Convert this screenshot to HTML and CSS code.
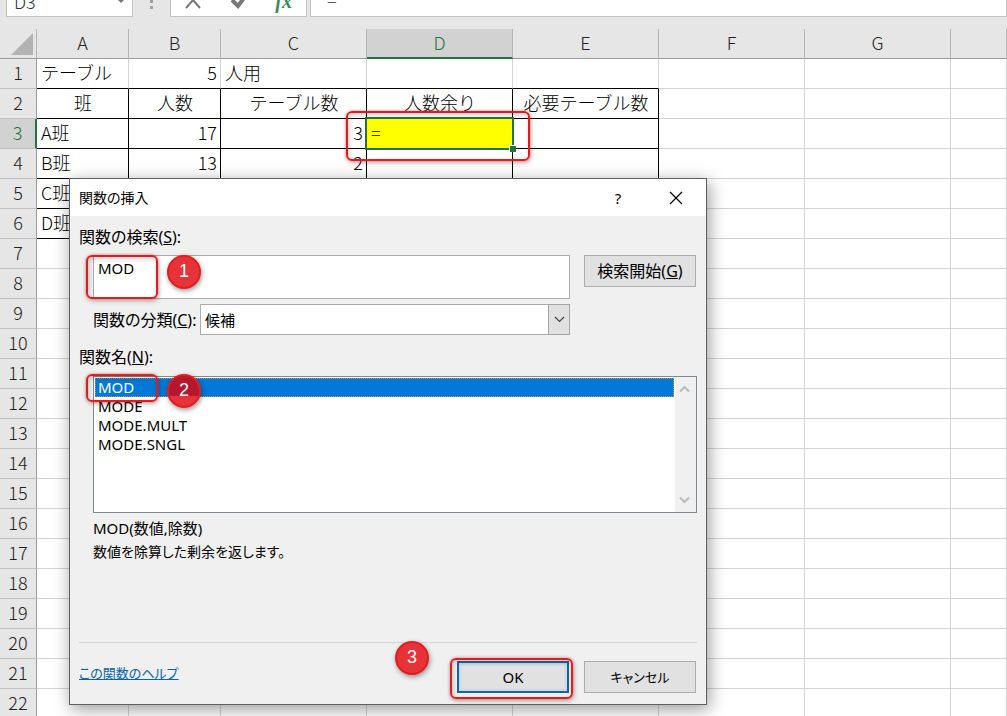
FILE: index.html
```html
<!DOCTYPE html>
<html lang="ja">
<head>
<meta charset="utf-8">
<title>関数の挿入</title>
<link rel="stylesheet" href="styles.css">
</head>
<body>
<header class="formula-bar">
  <div class="name-box">
    <input class="bar-input" aria-label="名前ボックス" value="D3">
    <span class="name-arrow"></span>
  </div>
  <span class="bar-dots">
    <svg width="4" height="18" viewBox="0 0 4 18"><path d="M0 1h3v3H0zM0 7h3v3H0z" fill="#a0a0a0"/></svg>
  </span>
  <div class="bar-buttons">
    <button type="button" aria-label="キャンセル"><svg width="20" height="20" viewBox="0 0 20 20"><path d="M3 1L17 17M17 1L3 17" fill="none" stroke="#777" stroke-width="2"/></svg></button>
    <button type="button" aria-label="入力"><svg width="20" height="20" viewBox="0 0 20 20"><path d="M3 9L9 15L18 3" fill="none" stroke="#777" stroke-width="4"/></svg></button>
    <button type="button" class="fx" aria-label="関数の挿入"><i>fx</i></button>
  </div>
  <input class="bar-input formula" aria-label="数式バー" value="=">
</header>

<main>
<table class="sheet">
  <colgroup><col class="c-num"><col class="c-s"><col class="c-s"><col class="c-m"><col class="c-m"><col class="c-m"><col class="c-m"><col class="c-m"><col></colgroup>
  <thead>
    <tr><th class="corner"><svg width="22" height="22" viewBox="0 0 22 22"><path d="M22 0V22H0z" fill="#b2b2b2"/></svg></th><th>A</th><th>B</th><th>C</th><th class="active">D</th><th>E</th><th>F</th><th>G</th><th></th></tr>
  </thead>
  <tbody>
    <tr class="first"><th>1</th><td>テーブル</td><td class="num">5</td><td>人用</td><td></td><td></td><td></td><td></td><td></td></tr>
    <tr class="boxed titles"><th>2</th><td>班</td><td>人数</td><td>テーブル数</td><td>人数余り</td><td>必要テーブル数</td><td></td><td></td><td></td></tr>
    <tr class="boxed"><th class="active">3</th><td>A班</td><td class="num">17</td><td class="num">3</td><td class="selected">=<span class="selection"></span><span class="mark mark-cell"></span></td><td></td><td></td><td></td><td></td></tr>
    <tr class="boxed"><th>4</th><td>B班</td><td class="num">13</td><td class="num">2</td><td></td><td></td><td></td><td></td><td></td></tr>
    <tr class="boxed"><th>5</th><td>C班</td><td></td><td></td><td></td><td></td><td></td><td></td><td></td></tr>
    <tr class="boxed"><th>6</th><td>D班</td><td></td><td></td><td></td><td></td><td></td><td></td><td></td></tr>
    <tr><th>7</th><td></td><td></td><td></td><td></td><td></td><td></td><td></td><td></td></tr>
    <tr><th>8</th><td></td><td></td><td></td><td></td><td></td><td></td><td></td><td></td></tr>
    <tr><th>9</th><td></td><td></td><td></td><td></td><td></td><td></td><td></td><td></td></tr>
    <tr><th>10</th><td></td><td></td><td></td><td></td><td></td><td></td><td></td><td></td></tr>
    <tr><th>11</th><td></td><td></td><td></td><td></td><td></td><td></td><td></td><td></td></tr>
    <tr><th>12</th><td></td><td></td><td></td><td></td><td></td><td></td><td></td><td></td></tr>
    <tr><th>13</th><td></td><td></td><td></td><td></td><td></td><td></td><td></td><td></td></tr>
    <tr><th>14</th><td></td><td></td><td></td><td></td><td></td><td></td><td></td><td></td></tr>
    <tr><th>15</th><td></td><td></td><td></td><td></td><td></td><td></td><td></td><td></td></tr>
    <tr><th>16</th><td></td><td></td><td></td><td></td><td></td><td></td><td></td><td></td></tr>
    <tr><th>17</th><td></td><td></td><td></td><td></td><td></td><td></td><td></td><td></td></tr>
    <tr><th>18</th><td></td><td></td><td></td><td></td><td></td><td></td><td></td><td></td></tr>
    <tr><th>19</th><td></td><td></td><td></td><td></td><td></td><td></td><td></td><td></td></tr>
    <tr><th>20</th><td></td><td></td><td></td><td></td><td></td><td></td><td></td><td></td></tr>
    <tr><th>21</th><td></td><td></td><td></td><td></td><td></td><td></td><td></td><td></td></tr>
    <tr><th>22</th><td></td><td></td><td></td><td></td><td></td><td></td><td></td><td></td></tr>
  </tbody>
</table>
</main>

<section class="dialog" role="dialog" aria-labelledby="dlg-title">
  <div class="title-bar">
    <h1 id="dlg-title">関数の挿入</h1>
    <button type="button">?</button>
    <button type="button" aria-label="閉じる"><svg width="14" height="14" viewBox="0 0 14 14"><path d="M1 1L13 13M13 1L1 13" fill="none" stroke="#000" stroke-width="1.2"/></svg></button>
  </div>
  <form class="dialog-body">
    <label class="caption" for="search">関数の検索(<u>S</u>):</label>
    <div class="search-row">
      <textarea id="search">MOD</textarea>
      <button type="button" class="btn caption">検索開始(<u>G</u>)</button>
      <span class="mark mark-search"></span>
      <span class="badge badge-side">1</span>
    </div>
    <div class="category-row">
      <label class="caption" for="category">関数の分類(<u>C</u>):</label>
      <div class="combo">
        <select id="category"><option>候補</option></select>
        <span class="combo-arrow"><svg width="11" height="7" viewBox="0 0 11 7"><path d="M1 1L5.500 5.500L10 1" fill="none" stroke="#444" stroke-width="1.200"/></svg></span>
      </div>
    </div>
    <span class="caption" id="fn-label">関数名(<u>N</u>):</span>
    <div class="list-box">
      <ul role="listbox" aria-labelledby="fn-label">
        <li role="option" aria-selected="true">MOD</li>
        <li role="option">MODE</li>
        <li role="option">MODE.MULT</li>
        <li role="option">MODE.SNGL</li>
      </ul>
      <div class="scroll">
        <button type="button" aria-label="上へ"><svg width="11" height="8" viewBox="0 0 11 8"><path d="M1 6.500L5.500 2L10 6.500" fill="none" stroke="#b9b9b9" stroke-width="2"/></svg></button>
        <button type="button" aria-label="下へ"><svg width="11" height="8" viewBox="0 0 11 8"><path d="M1 1.500L5.500 6L10 1.500" fill="none" stroke="#b9b9b9" stroke-width="2"/></svg></button>
      </div>
      <span class="mark mark-item"></span>
      <span class="badge badge-side badge-list">2</span>
    </div>
    <div class="description">
      <p>MOD(数値,除数)</p>
      <p class="detail">数値を除算した剰余を返します。</p>
    </div>
    <footer class="actions">
      <a href="#help">この関数のヘルプ</a>
      <div class="ok-wrap">
        <button type="button" class="btn ok">OK</button>
        <span class="mark mark-ok"></span>
        <span class="badge badge-ok">3</span>
      </div>
      <button type="button" class="btn cancel">キャンセル</button>
    </footer>
  </form>
</section>
</body>
</html>
```

FILE: styles.css
```css
* {
  box-sizing: border-box;
}

body {
  margin: 0;
  height: 100vh;
  overflow: hidden;
  position: relative;
  background: #e6e6e6;
  color: #000;
  font-family: "Noto Sans CJK JP", sans-serif;
  font-size: 18px;
  font-weight: 300;
}

button,
input,
textarea,
select {
  font: inherit;
  color: inherit;
  margin: 0;
  padding: 0;
  border: 0;
  border-radius: 0;
  background: none;
}

/* Formula bar */
.formula-bar {
  display: flex;
  align-items: flex-end;
  height: 17px;
  margin-bottom: 12px;
  padding-left: 6px;
  overflow: hidden;
}

.name-box,
.bar-buttons,
.formula {
  height: 32px;
  border: 1px solid #c3c3c3;
  background: #fff;
}

.name-box {
  display: flex;
  align-items: center;
  width: 127px;
  padding: 0 7px;
}

.bar-input {
  min-width: 0;
  flex: 1;
  color: #333;
}

.formula {
  height: 36px;
  padding-left: 16px;
}

.name-arrow {
  border: 4px solid transparent;
  border-top-color: #777;
  border-bottom: 0;
}

.bar-dots {
  display: flex;
  justify-content: center;
  width: 37px;
}

.bar-buttons {
  display: flex;
  justify-content: space-between;
  align-items: center;
  width: 137px;
  padding: 0 14px 0 12px;
  margin-right: 3px;
}

.bar-buttons button {
  display: flex;
}

.bar-buttons .fx {
  font-family: "Liberation Serif", serif;
  font-size: 20px;
  font-weight: 700;
  line-height: 20px;
  color: #3c8a56;
}

/* Worksheet grid */
.sheet {
  width: 100%;
  table-layout: fixed;
  border-spacing: 0;
  background: #fff;
  line-height: 24px;
}

.c-num {
  width: 37px;
}

.c-s {
  width: 92px;
}

.c-m {
  width: 146px;
}

.sheet th,
.sheet td {
  height: 30px;
  padding: 0 3px 4px 4px;
  border-right: 1px solid #d4d4d4;
  border-bottom: 1px solid #d4d4d4;
  font-weight: 300;
  white-space: nowrap;
}

.sheet th {
  padding: 0 0 4px;
  background: #e6e6e6;
  color: #222;
  border-right-color: #b4b4b4;
  border-bottom-color: #c0c0c0;
}

.sheet thead th {
  border-bottom-color: #9b9b9b;
}

.sheet tbody th {
  border-right-color: #9b9b9b;
}

.sheet th.active {
  background: #d2d2d2;
  color: #217346;
}

.sheet thead th.active {
  padding-bottom: 3px;
  border-bottom: 2px solid #217346;
}

.sheet tbody th.active {
  border-right: 2px solid #217346;
}

.sheet .corner {
  padding: 0;
}

.sheet .corner svg {
  display: block;
  margin-left: 11px;
}

.sheet .num {
  text-align: right;
}

.titles td {
  text-align: center;
}

.first td:nth-child(-n+6) {
  border-bottom-color: #000;
}

.boxed td:nth-child(-n+6) {
  border-right-color: #000;
  border-bottom-color: #000;
}

.sheet .selected {
  position: relative;
  background: #ff0;
}

.selection {
  position: absolute;
  inset: -2px;
  border: 2px solid #217346;
}

.selection::after {
  content: "";
  position: absolute;
  right: -4px;
  bottom: -4px;
  width: 6px;
  height: 6px;
  border: 1px solid #fff;
  border-width: 1px 0 0 1px;
  background: #217346;
}

/* Callouts */
.mark {
  position: absolute;
  border: 2px solid #da1f22;
  border-radius: 6px;
  box-shadow: 0 0 3px rgba(230, 30, 30, 0.5), 1px 2px 5px rgba(0, 0, 0, 0.25), inset 1px 2px 5px rgba(0, 0, 0, 0.2);
  pointer-events: none;
}

.mark-cell {
  inset: -8px -18px -13px -21px;
}

.badge {
  position: absolute;
  width: 34px;
  height: 34px;
  border: 2px solid #e01e22;
  border-radius: 50%;
  background: #e63238;
  box-shadow: 1px 2px 5px rgba(0, 0, 0, 0.4);
  color: #fff;
  font-family: "Liberation Sans", sans-serif;
  font-size: 18px;
  line-height: 28px;
  text-align: center;
}

/* Insert-function dialog */
.dialog {
  position: absolute;
  left: 69px;
  top: 178px;
  width: 638px;
  border: 1px solid #5f5f5f;
  background: #f0f0f0;
  box-shadow: 2px 4px 16px rgba(0, 0, 0, 0.4);
  font-family: "Noto Sans", "Noto Sans CJK JP", sans-serif;
  font-size: 15px;
  font-weight: 400;
  line-height: 24px;
  font-feature-settings: "palt";
}

.title-bar {
  display: flex;
  align-items: center;
  height: 37px;
  padding-left: 9px;
  background: #fff;
}

.title-bar h1 {
  flex: 1;
  margin: 0;
  font-size: 14px;
  font-weight: 400;
}

.title-bar button {
  display: flex;
  align-items: center;
  justify-content: center;
  width: 58px;
  height: 36px;
}

.title-bar button:last-child {
  margin-right: 1px;
}

.dialog-body {
  display: flex;
  flex-direction: column;
  padding: 9px 9px 0;
}

.caption {
  display: block;
  font-size: 16px;
}

.search-row {
  position: relative;
  display: flex;
  align-items: flex-start;
  gap: 14px;
  margin: 6px 1px 5px 14px;
}

textarea {
  flex: 1;
  height: 44px;
  padding: 0 4px;
  border: 1px solid #ababab;
  background: #fff;
  resize: none;
}

.btn {
  width: 112px;
  height: 32px;
  border: 1px solid #adadad;
  background: #e1e1e1;
  text-align: center;
}

.cancel,
.actions a {
  font-size: 13px;
}

.category-row {
  display: flex;
  align-items: center;
  justify-content: space-between;
  margin: 0 127px 10px 14px;
}

.combo {
  position: relative;
  width: 370px;
}

.combo select {
  display: block;
  width: 100%;
  height: 31px;
  padding-left: 4px;
  border: 1px solid #ababab;
  background: #fff;
  appearance: none;
}

.combo-arrow {
  position: absolute;
  inset: 0 0 0 auto;
  display: flex;
  align-items: center;
  justify-content: center;
  width: 22px;
  border: 1px solid #a5a5a5;
  background: #e1e1e1;
  pointer-events: none;
}

.list-box {
  position: relative;
  display: flex;
  height: 137px;
  margin: 7px 0 0 14px;
  border: 1px solid #828790;
  background: #fff;
}

.list-box ul {
  flex: 1;
  margin: 0;
  padding: 1px;
  list-style: none;
  line-height: 19px;
}

.list-box li {
  padding-left: 3px;
}

.list-box li[aria-selected="true"] {
  outline: 1px dotted #d88a3c;
  outline-offset: -1px;
  background: #0078d7;
  color: #fff;
}

.scroll {
  display: flex;
  flex-direction: column;
  justify-content: space-between;
  width: 21px;
  padding-right: 2px;
  background: #f0f0f0;
}

.scroll button {
  display: flex;
  align-items: center;
  justify-content: center;
  height: 24px;
}

.description {
  min-height: 129px;
  padding: 3px 0 0 14px;
}

.description p {
  margin: 0;
}

.description .detail {
  font-size: 14px;
}

.actions {
  display: flex;
  align-items: center;
  gap: 15px;
  height: 62px;
  padding: 6px 1px 0 0;
  border-top: 1px solid #d5d5d5;
}

.actions a {
  margin: 0 auto 8px 0;
  color: #0563a8;
}

.ok-wrap {
  position: relative;
  display: flex;
}

.ok {
  border: 2px solid #1d6494;
  box-shadow: inset 0 0 3px 1px #a9d8f7;
}

.mark-search {
  left: -7px;
  top: 0;
  width: 72px;
  height: 44px;
}

.mark-item {
  left: -8px;
  top: -3px;
  width: 72px;
  height: 28px;
}

.mark-ok {
  inset: -3px -4px -6px -7px;
}

.badge-side {
  left: 74px;
  top: 0;
}

.badge-list {
  left: 73px;
  top: -3px;
  background: linear-gradient(#b4182e 66%, #e63238 66%);
}

.badge-ok {
  left: -62px;
  top: -20px;
}
```
